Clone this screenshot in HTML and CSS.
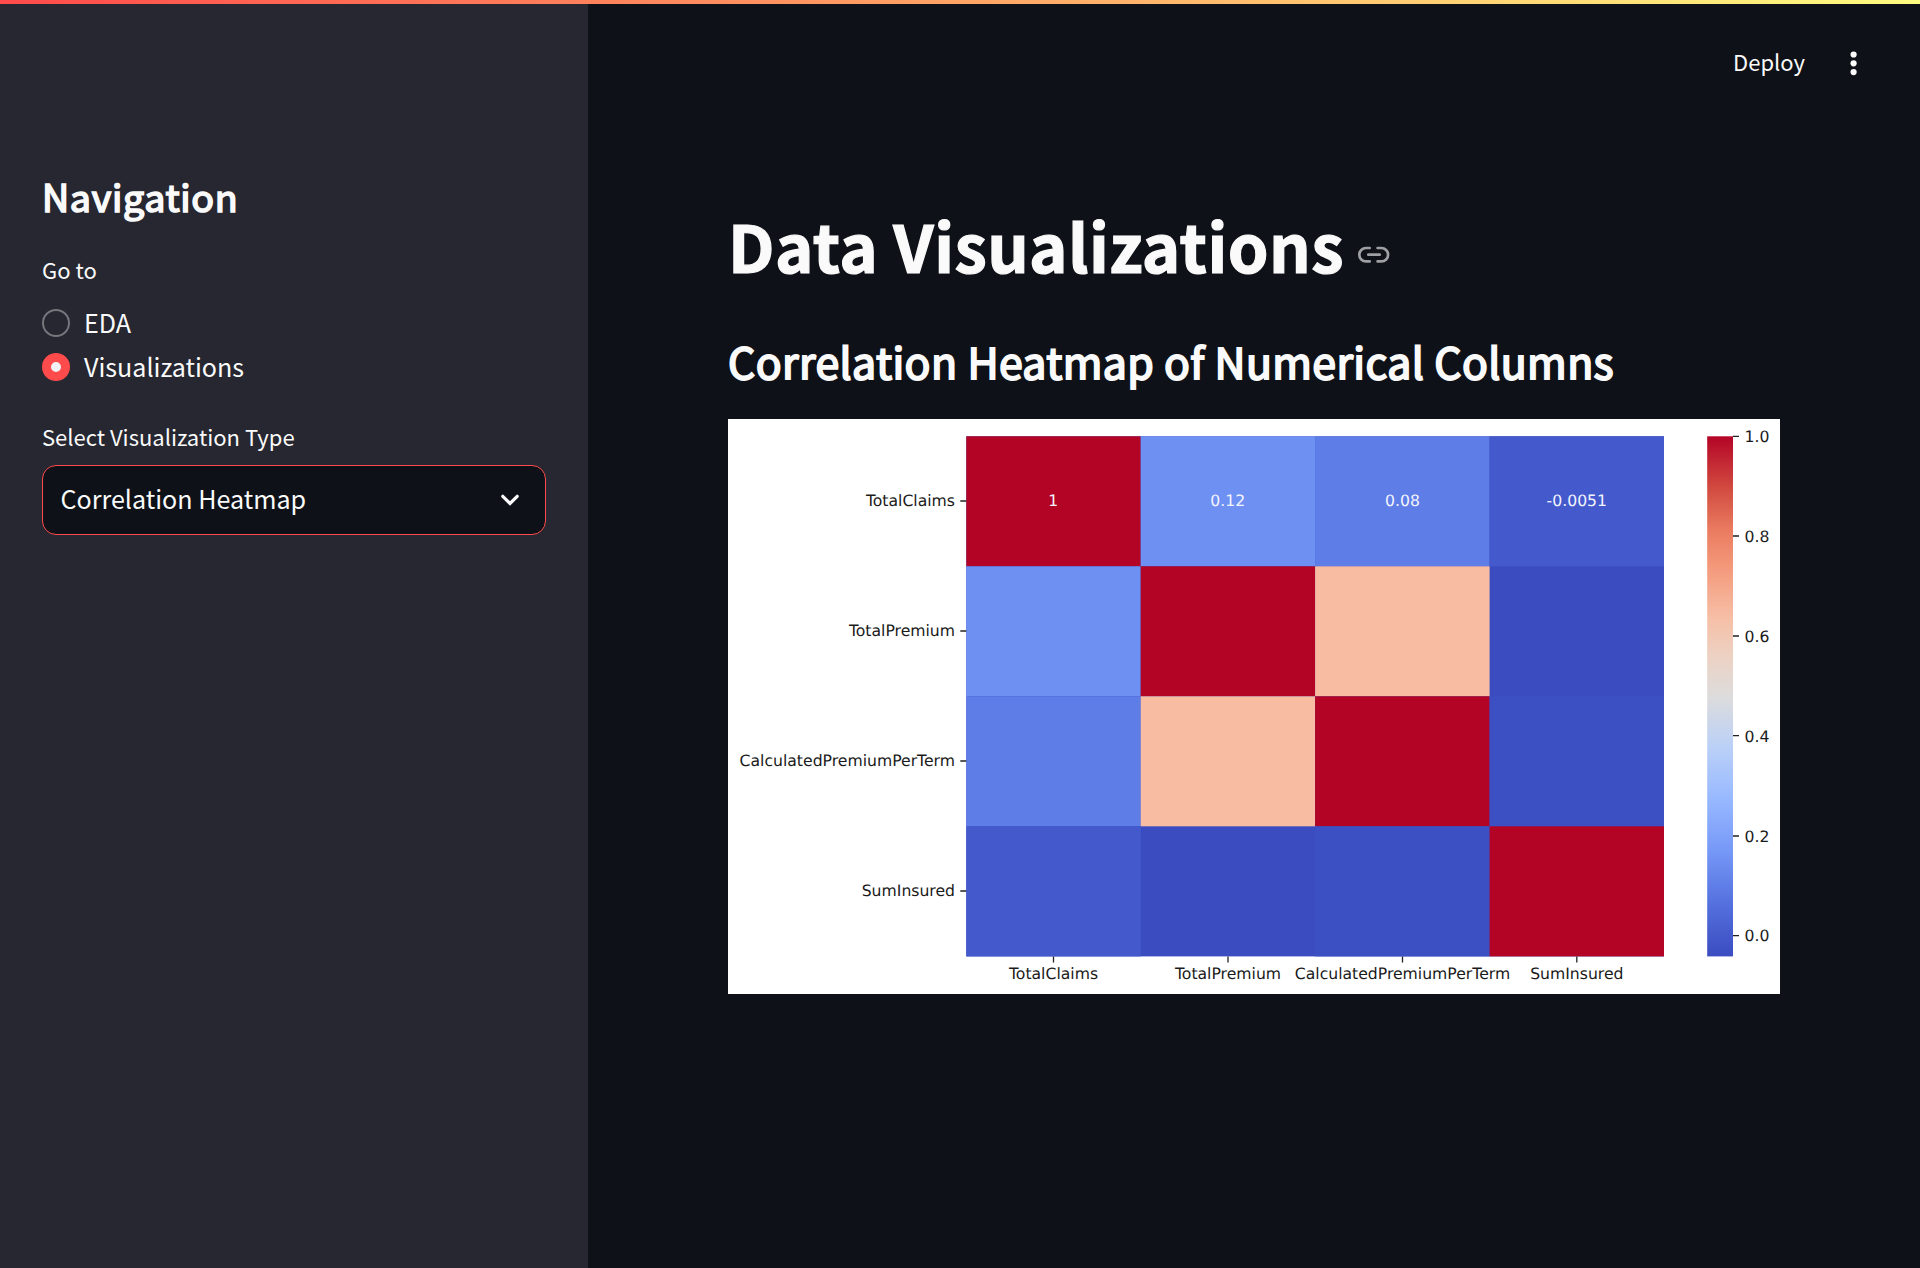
FILE: index.html
```html
<!DOCTYPE html>
<html lang="en">
<head>
<meta charset="utf-8">
<title>Data Visualizations</title>
<link rel="stylesheet" href="styles.css">
</head>
<body>
<div class="decoration"></div>
<div class="app">
  <aside class="sidebar">
    <h2 class="nav-title"><span>Navigation</span></h2>
    <div class="label">Go to</div>
    <div class="radio-group">
      <label class="radio"><span class="dot"></span><span class="radio-text">EDA</span></label>
      <label class="radio"><span class="dot dot-on"></span><span class="radio-text">Visualizations</span></label>
    </div>
    <div class="label label-select">Select Visualization Type</div>
    <div class="select">
      <span class="select-value">Correlation Heatmap</span>
      <svg class="chevron" width="20" height="14" viewBox="0 0 20 14"><path d="M2.8 3.3 L10 10.4 L17.2 3.3" fill="none" stroke="#fafafa" stroke-width="3.2" stroke-linecap="round"/></svg>
    </div>
  </aside>
  <main class="main">
    <header class="toolbar">
      <span class="deploy">Deploy</span>
      <svg class="kebab" width="8" height="26" viewBox="0 0 8 26"><g fill="#fafafa"><circle cx="3.6" cy="4.5" r="3.1"/><circle cx="3.6" cy="13.3" r="3.1"/><circle cx="3.6" cy="22.1" r="3.1"/></g></svg>
    </header>
    <h1 class="title"><span>Data Visualizations</span>
      <svg class="link" width="34" height="20" viewBox="0 0 34 20"><path d="M13.7 3H10a6.7 6.7 0 0 0 0 13.4h3.7M21.6 3h3.8a6.7 6.7 0 0 1 0 13.4h-3.8M12.3 9.7h11.4" fill="none" stroke="#9d9fa2" stroke-width="2.7" stroke-linecap="round"/></svg>
    </h1>
    <h3 class="subtitle"><span>Correlation Heatmap of Numerical Columns</span></h3>
    <svg class="chart" width="1052" height="575" viewBox="0 0 1052 575">
      <defs>
        <linearGradient id="coolwarm" x1="0" y1="1" x2="0" y2="0">
          <stop offset="0" stop-color="#3b4cc0"/><stop offset=".1" stop-color="#5470de"/>
          <stop offset=".2" stop-color="#7597f6"/><stop offset=".3" stop-color="#97b8ff"/>
          <stop offset=".4" stop-color="#bad0f8"/><stop offset=".5" stop-color="#dddcdc"/>
          <stop offset=".58" stop-color="#edd1c2"/><stop offset=".65" stop-color="#f6bfa6"/>
          <stop offset=".75" stop-color="#f4987a"/><stop offset=".82" stop-color="#ea7b60"/>
          <stop offset=".9" stop-color="#d24b40"/><stop offset="1" stop-color="#b40426"/>
        </linearGradient>
      </defs>
      <rect width="1052" height="575" fill="#fff"/>
      <g transform="translate(238.3 17.3)">
        <rect width="697.7" height="520.1" fill="#3b4cc0"/>
        <rect width="174.4" height="130" fill="#b40426"/>
        <rect x="174.4" width="174.4" height="130" fill="#6e90f2"/>
        <rect x="348.8" width="174.5" height="130" fill="#5e7de7"/>
        <rect x="523.3" width="174.4" height="130" fill="#445acc"/>
        <rect y="130" width="174.4" height="130" fill="#6e90f2"/>
        <rect x="174.4" y="130" width="174.4" height="130" fill="#b40426"/>
        <rect x="348.8" y="130" width="174.5" height="130" fill="#f7bca1"/>
        <rect y="260" width="174.4" height="130" fill="#5e7de7"/>
        <rect x="174.4" y="260" width="174.4" height="130" fill="#f7bca1"/>
        <rect x="348.8" y="260" width="174.5" height="130" fill="#b40426"/>
        <rect x="523.3" y="260" width="174.4" height="130" fill="#3d50c3"/>
        <rect y="390" width="174.4" height="130.1" fill="#445acc"/>
        <rect x="348.8" y="390" width="174.5" height="130.1" fill="#3d50c3"/>
        <rect x="523.3" y="390" width="174.4" height="130.1" fill="#b40426"/>
      </g>
      <rect x="979.2" y="17.3" width="25.8" height="520.1" fill="url(#coolwarm)"/>
      <path class="ticks" d="M232.3 82h6M232.3 212h6M232.3 342h6M232.3 472h6M325.5 537.4v6M500 537.4v6M674.5 537.4v6M848.8 537.4v6M1005 17.3h6M1005 117h6M1005 217h6M1005 316.7h6M1005 417h6M1005 516.6h6"/>
      <g class="annot">
        <text x="325.2" y="87">1</text><text x="499.7" y="87">0.12</text><text x="674.5" y="87">0.08</text><text x="848.8" y="87">-0.0051</text>
      </g>
      <g class="ylabels">
        <text x="227" y="87">TotalClaims</text><text x="227" y="217">TotalPremium</text><text x="227" y="347">CalculatedPremiumPerTerm</text><text x="227" y="477">SumInsured</text>
      </g>
      <g class="xlabels">
        <text x="325.5" y="560">TotalClaims</text><text x="500" y="560">TotalPremium</text><text x="674.5" y="560">CalculatedPremiumPerTerm</text><text x="848.8" y="560">SumInsured</text>
      </g>
      <g class="scale">
        <text x="1016.6" y="23">1.0</text><text x="1016.6" y="123">0.8</text><text x="1016.6" y="223">0.6</text><text x="1016.6" y="323">0.4</text><text x="1016.6" y="423">0.2</text><text x="1016.6" y="522">0.0</text>
      </g>
    </svg>
  </main>
</div>
</body>
</html>
```
FILE: styles.css
```css
* { box-sizing: border-box; }
body {
  margin: 0;
  height: 1268px;
  display: flex;
  flex-direction: column;
  overflow: hidden;
  background: #0e1117;
  color: #fafafa;
  font-family: "Noto Sans CJK JP", "Noto Sans CJK SC", sans-serif;
}
h1, h2, h3 { margin: 0; }
.decoration { height: 4px; flex: none; background: linear-gradient(90deg, #ff4b4b, #fffd80); }
.app { flex: 1; display: flex; min-height: 0; }
.sidebar { width: 588px; flex: none; padding: 167px 42px 0; background: #262730; }
.nav-title { font-size: 37.6px; line-height: 50px; font-weight: 400; letter-spacing: 0.68px; -webkit-text-stroke: 1.7px #fafafa; }
.label { margin-top: 30px; font-size: 22px; line-height: 36px; }
.radio-group { margin-top: 14px; }
.radio { display: flex; height: 44px; align-items: center; gap: 14px; font-size: 25.1px; }
.radio-text { line-height: 42px; padding-bottom: 2px; }
.dot { width: 28px; height: 28px; border-radius: 50%; border: 2px solid #75757b; }
.dot-on { border: 9px solid #ff4b4b; background: #f0f2f6; }
.label-select { margin-top: 29px; }
.select {
  display: flex; align-items: center; justify-content: space-between;
  height: 70px; margin-top: 11px; padding: 0 25px 0 17.5px;
  border: 1px solid #ff4b4b; border-radius: 14px; background: #0e1117;
  font-size: 25.1px;
}
.select-value { line-height: 40px; padding-bottom: 5px; }
.main { flex: 1; padding: 0 140px; }
.toolbar { display: flex; justify-content: flex-end; align-items: center; gap: 45px; height: 118px; margin-right: -78px; }
.deploy { font-size: 22px; line-height: 36px; padding-bottom: 5px; }
.title { display: flex; align-items: center; gap: 12px; margin-top: 83px; font-size: 65.2px; line-height: 80px; font-weight: 700; letter-spacing: 0.45px; -webkit-text-stroke: 1.2px #fafafa; }
.link { margin-top: 20px; }
.subtitle { margin-top: 45px; font-size: 42.8px; line-height: 60px; font-weight: 400; letter-spacing: 0.38px; -webkit-text-stroke: 1.9px #fafafa; white-space: nowrap; }
.chart { display: block; margin-top: 29px; }
.chart text { font-family: "DejaVu Sans", sans-serif; font-size: 15.65px; fill: #1a1a1a; text-rendering: geometricPrecision; }
.chart .annot text { fill: #f4f5fc; text-anchor: middle; }
.ylabels { text-anchor: end; }
.xlabels { text-anchor: middle; }
.ticks { stroke: #222; stroke-width: 1.3; }
```
